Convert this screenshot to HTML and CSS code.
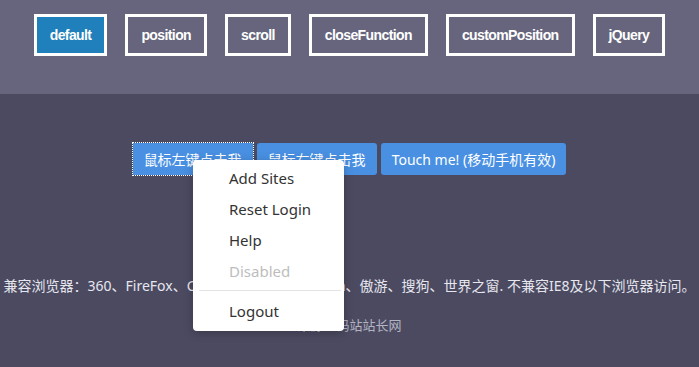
FILE: index.html
```html
<!DOCTYPE html>
<html lang="zh-CN">
<head>
    <meta charset="UTF-8">
    <meta name="viewport" content="width=device-width, initial-scale=1.0">
    <title>右键菜单插件</title>
    <link rel="stylesheet" href="styles.css">
</head>
<body>
    <!-- 顶部演示导航 -->
    <div class="demo-nav">
        <a class="nav-item active" href="#">default</a>
        <a class="nav-item" href="#">position</a>
        <a class="nav-item" href="#">scroll</a>
        <a class="nav-item" href="#">closeFunction</a>
        <a class="nav-item" href="#">customPosition</a>
        <a class="nav-item" href="#">jQuery</a>
    </div>

    <div class="demo-body">
        <div class="btn-row">
            <button class="demo-btn focused">鼠标左键点击我</button>
            <button class="demo-btn">鼠标右键点击我</button>
            <button class="demo-btn">Touch me! (移动手机有效)</button>
        </div>

        <p class="browser-info">兼容浏览器：360、FireFox、Chrome、Safari、Opera、傲游、搜狗、世界之窗. 不兼容IE8及以下浏览器访问。</p>
        <p class="source">来源：码站站长网</p>
    </div>

    <!-- 右键菜单 -->
    <ul class="context-menu">
        <li class="menu-item">Add Sites</li>
        <li class="menu-item">Reset Login</li>
        <li class="menu-item">Help</li>
        <li class="menu-item disabled">Disabled</li>
        <li class="menu-divider"></li>
        <li class="menu-item">Logout</li>
    </ul>
</body>
</html>
```

FILE: styles.css
```css
:root {
    --header-bg: #66657d;
    --body-bg: #4b4a61;
    --nav-blue: #1f80bb;
    --btn-blue: #4990e2;
    --text-light: #e6e6ee;
    --text-muted: #b4b4c2;
}

* {
    box-sizing: border-box;
    margin: 0;
    padding: 0;
}

html, body {
    height: 100%;
}

body {
    font-family: "Noto Sans", "Noto Sans CJK SC", sans-serif;
    background-color: var(--body-bg);
    color: var(--text-light);
    position: relative;
}

/* 顶部导航 */
.demo-nav {
    background-color: var(--header-bg);
    display: flex;
    justify-content: center;
    gap: 18px;
    padding: 14px 0 38px;
}

.nav-item {
    display: block;
    height: 42px;
    line-height: 36px;
    padding: 0 13px;
    border: 3px solid #fff;
    color: #fff;
    text-decoration: none;
    font-family: "Liberation Sans", "Noto Sans CJK SC", sans-serif;
    font-weight: bold;
    font-size: 14px;
    letter-spacing: -0.6px;
}

.nav-item.active {
    background-color: var(--nav-blue);
}

/* 演示按钮 */
.demo-body {
    padding-top: 49px;
    text-align: center;
}

.btn-row {
    display: flex;
    justify-content: center;
    gap: 4px;
}

.demo-btn {
    height: 32px;
    padding: 0 11px;
    border: none;
    border-radius: 3px;
    background-color: var(--btn-blue);
    color: #fff;
    font-family: "Noto Sans", "Noto Sans CJK SC", sans-serif;
    font-size: 14px;
    cursor: pointer;
}

.demo-btn.focused {
    border-radius: 0;
    outline: 1px dotted #fff;
}

.browser-info {
    margin-top: 99px;
    font-size: 14px;
    line-height: 24px;
    white-space: nowrap;
}

.source {
    margin-top: 15px;
    font-size: 13px;
    line-height: 24px;
    color: var(--text-muted);
}

/* 右键菜单 */
.context-menu {
    position: absolute;
    left: 193px;
    top: 160px;
    width: 151px;
    padding: 3px 0 4px;
    list-style: none;
    background: #fff;
    border-radius: 4px;
    box-shadow: 0 2px 10px rgba(0, 0, 0, 0.25);
}

.menu-item {
    height: 31px;
    line-height: 31px;
    padding-left: 36px;
    font-size: 15px;
    color: #333;
    cursor: pointer;
}

.menu-item.disabled {
    color: #bdbdbd;
    cursor: default;
}

.menu-divider {
    height: 1px;
    margin: 3px 3px 5px 6px;
    background: #e3e3e3;
}
```
